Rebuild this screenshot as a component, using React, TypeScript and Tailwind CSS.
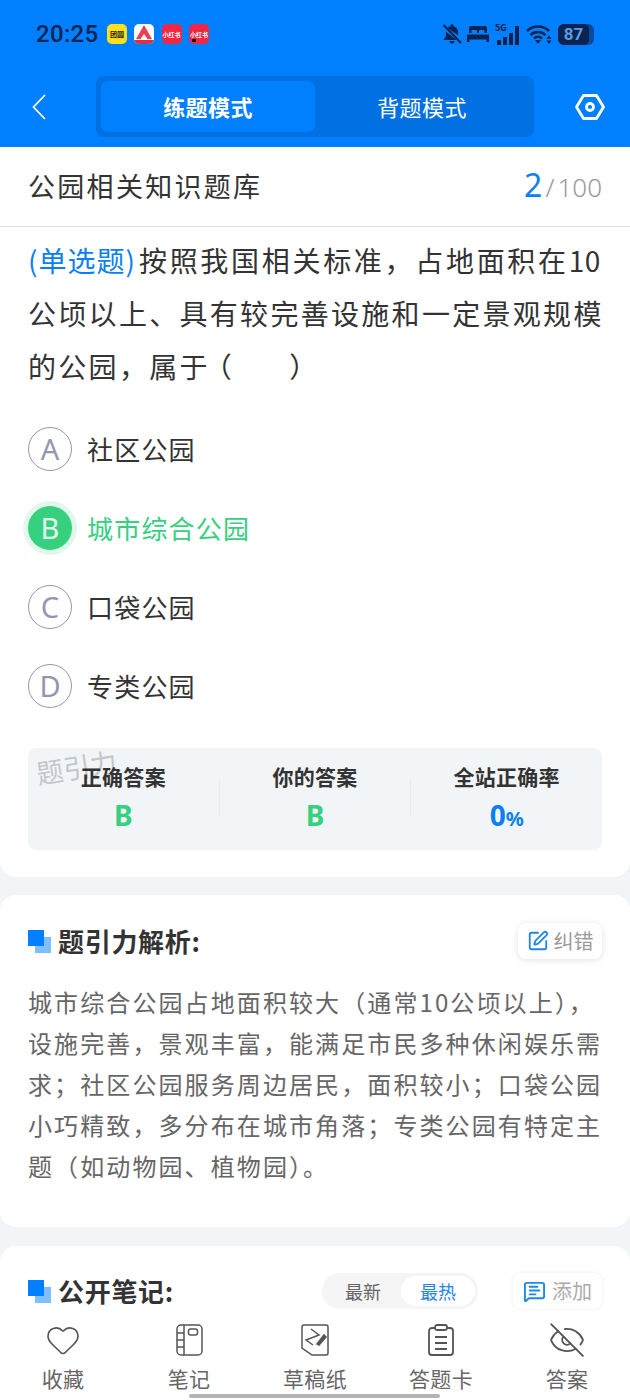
import { Heart, EyeOff, SquarePen, MessageSquareText } from "lucide-react";

const CJK = "font-['Noto_Sans_CJK_SC','Noto_Sans',sans-serif]";

const StatusBar = () => (
	<div className="h-[76px] pl-[36px] pr-[36px] pt-[20px] flex items-start justify-between">
		<div className="flex items-center h-[28px]">
			<span className="text-[24px] font-medium leading-[28px] tracking-[0.3px] text-[#0a2350] w-[62px] font-['Roboto',sans-serif]">20:25</span>
			<div className="flex gap-[7.300px] ml-[9px]">
				<div className="w-[20px] h-[20px] rounded-[5px] bg-[#ffe01a] flex items-center justify-center text-[7px] font-bold text-[#222]">团圆</div>
				<div className="w-[20px] h-[20px] rounded-[5px] bg-white flex items-center justify-center overflow-hidden">
					<svg viewBox="0 0 20 20" className="w-[20px] h-[20px]">
						<path d="M10 1 L18 15 L13.500 15 L10 10 L6.500 15 L2 15 Z" fill="#ef4050" />
						<rect x="0" y="16" width="20" height="4" fill="#d9304a" />
					</svg>
				</div>
				<div className="w-[20px] h-[20px] rounded-[5px] bg-[#ee2745] flex items-center justify-center text-[6px] font-bold text-white">小红书</div>
				<div className="relative w-[20px] h-[20px] rounded-[5px] bg-[#ee2745] flex items-center justify-center text-[6px] font-bold text-white">
					小红书
					<span className="absolute left-[3px] bottom-[2px] w-[4px] h-[3px] rounded-[1px] bg-black" />
				</div>
			</div>
		</div>
		<div className="flex items-center h-[28px] text-[#0a2350]">
			{/* bell muted */}
			<svg viewBox="0 0 20 20" className="w-[20px] h-[20px] mr-[5px]" fill="currentColor">
				<path d="M8.500 1.500a1.500 1.500 0 0 1 3 0v.7c3 .7 4.700 3 4.700 6v3.300L3.700 2.700 5.200 4.200C6 3.200 7 2.500 8.500 2.200Z" />
				<path d="M3.800 7.500 14.500 16H1.800v-1l2-2.200Z" />
				<path d="M7.500 17h5a2.500 2.500 0 0 1-5 0Z" />
				<path d="M1.500 1 19 19" stroke="currentColor" strokeWidth="2" />
			</svg>
			<svg viewBox="0 0 22 16" className="w-[22px] h-[16px] mr-[6px]" fill="currentColor">
				<path d="M4 0h14a2 2 0 0 1 2 2v5h-2.500V5a1 1 0 0 0-1-1H13a1 1 0 0 0-1 1v2h-2V5a1 1 0 0 0-1-1H5.500a1 1 0 0 0-1 1v2H2V2a2 2 0 0 1 2-2Z" />
				<path d="M0 8.500h22V16h-2.500v-2.500h-17V16H0Z" />
			</svg>
			<div className="relative w-[24px] h-[21px] mr-[7px]">
				<span className="absolute left-0 top-[-1px] text-[9px] font-bold leading-[10px]">5G</span>
				<div className="absolute bottom-0 left-[2px] flex items-end gap-[2px]">
					<span className="w-[4px] h-[5px] bg-current" />
					<span className="w-[4px] h-[8px] bg-current" />
					<span className="w-[4px] h-[12px] bg-current" />
					<span className="w-[4px] h-[19px] bg-current" />
				</div>
			</div>
			<svg viewBox="0 0 26 21" className="w-[26px] h-[21px] mr-[6px]" fill="none" stroke="currentColor" strokeWidth="2.600">
				<path d="M1 7C7 1 17 1 23 7" />
				<path d="M4.500 11C8.500 7 15.500 7 19.500 11" />
				<path d="M8 14.500C10.500 12.300 13.500 12.300 16 14.500" />
				<path d="M9 16H15L12 20Z" fill="currentColor" stroke="none" />
				<path d="M20.500 15h5l-2.500-3.500ZM20.500 16.500h5l-2.500 3.500Z" fill="currentColor" stroke="none" />
			</svg>
			<div className="w-[36px] h-[21px] rounded-[6px] bg-[#0a4a9c] overflow-hidden">
				<div className="w-[31px] h-[21px] rounded-[5px] bg-[#0a2350] text-[#5d9be0] text-[17px] font-bold leading-[21px] text-center font-['Roboto',sans-serif]">87</div>
			</div>
		</div>
	</div>
);

const Header = () => (
	<div className={`h-[147px] bg-[#0080ff] text-white ${CJK}`}>
		<StatusBar />
		<div className="flex items-start pl-[32px] pr-[25px]">
			<div className="w-[64px] h-[61px] flex items-center">
				<svg viewBox="0 0 14 26" className="w-[14px] h-[26px]" fill="none" stroke="white" strokeWidth="1.800">
					<path d="M13 1 1.500 13 13 25" />
				</svg>
			</div>
			<div className="w-[438px] h-[61px] p-[5px] rounded-[8px] bg-[#0070e2] flex">
				<div className="w-[214px] rounded-[7px] bg-[#0080ff] flex items-center justify-center text-[22px] tracking-[0.400px] font-bold">练题模式</div>
				<div className="flex-1 flex items-center justify-center text-[22px] tracking-[0.400px]">背题模式</div>
			</div>
			<div className="flex-1 h-[61px] flex items-center justify-end">
				<svg viewBox="0 0 30 26" className="w-[30px] h-[26px]" fill="none" stroke="white" strokeWidth="2.800">
					<path d="M8.500 1.500h13L28.500 13l-7 11.500h-13L1.500 13Z" strokeLinejoin="round" />
					<circle cx="15" cy="13" r="3.500" />
				</svg>
			</div>
		</div>
	</div>
);

const Option = ({ letter, text, active }: { letter: string; text: string; active?: boolean }) => (
	<div className="h-[79px] flex items-center">
		{active ? (
			<div className="w-[44px] h-[44px] rounded-full bg-[#36d07f] ring-[5px] ring-[#e1f8ec] text-[#e6faef] flex items-center justify-center text-[29px] font-['Noto_Sans',sans-serif]">
				{letter}
			</div>
		) : (
			<div className="w-[44px] h-[44px] rounded-full border-[1.500px] border-[#9397ae] text-[#9397ae] flex items-center justify-center text-[29px] font-['Noto_Sans',sans-serif]">
				{letter}
			</div>
		)}
		<span className={`ml-[15px] text-[26px] tracking-[1.200px] ${active ? "text-[#36d07f]" : "text-[#333]"}`}>{text}</span>
	</div>
);

const ResultCell = ({ label, children }: { label: string; children: React.ReactNode }) => (
	<div className="flex-1 flex flex-col items-center">
		<span className="text-[21px] leading-[30px] tracking-[0.300px] font-bold text-[#333]">{label}</span>
		<span className="mt-[5px] leading-[38px] h-[38px] font-['Noto_Sans',sans-serif] font-bold text-[28px]">{children}</span>
	</div>
);

const ResultBox = () => (
	<div className="relative h-[102px] mt-[23px] pb-[3px] rounded-[8px] bg-[#f2f5f8] flex items-center">
		<span className="absolute left-[8px] top-[4px] -rotate-[9deg] text-[27px] leading-[30px] text-[#c4c6ca]">题引力</span>
		<div className="relative flex-1 flex items-center">
			<ResultCell label="正确答案">
				<span className="text-[#36d07f]">B</span>
			</ResultCell>
			<div className="w-px h-[38px] bg-[#eaedf0]" />
			<ResultCell label="你的答案">
				<span className="text-[#36d07f]">B</span>
			</ResultCell>
			<div className="w-px h-[38px] bg-[#eaedf0]" />
			<ResultCell label="全站正确率">
				<span className="text-[#0a80f5]">0<span className="text-[20px]">%</span></span>
			</ResultCell>
		</div>
	</div>
);

const Question = () => (
	<div className="bg-white rounded-b-[16px] h-[730px]">
		<div className="h-[80px] px-[28px] border-b border-[#e2e2e2] flex items-center justify-between">
			<span className="text-[27px] tracking-[2.300px] text-[#333]">公园相关知识题库</span>
			<span className="flex items-baseline font-['Noto_Sans',sans-serif] -mt-[4px]">
				<span className="text-[32px] text-[#0a80f5]">2</span>
				<span className="text-[26px] text-[#9a9a9a] ml-[3px] font-light">/</span>
				<span className="text-[26px] text-[#9a9a9a] ml-[3px] font-light">100</span>
			</span>
		</div>
		<div className="px-[28px]">
			<p className="text-[28px] tracking-[2.300px] leading-[53px] pt-[7px] text-[#333] whitespace-nowrap">
				<span className="text-[#0a80f5] mr-[3px] tracking-[1px]">(单选题)</span>
				<span className="tracking-[2.700px]">按照我国相关标准，占地面积在</span>
				<span className="tracking-[0.500px]">10</span>
				<br />
				公顷以上、具有较完善设施和一定景观规模
				<br />
				的公园，属<span className="tracking-[-3.700px]">于</span>（
				<span className="inline-block w-[55px]" />）
			</p>
			<div className="mt-[16px]">
				<Option letter="A" text="社区公园" />
				<Option letter="B" text="城市综合公园" active />
				<Option letter="C" text="口袋公园" />
				<Option letter="D" text="专类公园" />
			</div>
			<ResultBox />
		</div>
	</div>
);

const SectionMark = () => (
	<div className="relative w-[23px] h-[23px]">
		<span className="absolute right-0 bottom-0 w-[16px] h-[16px] bg-[#80bfff]" />
		<span className="absolute left-0 top-0 w-[16px] h-[16px] bg-[#0080ff]" />
	</div>
);

const Analysis = () => (
	<div className="mt-[18px] bg-white rounded-[16px] h-[332px] px-[28px] pt-[28px]">
		<div className="flex items-center justify-between h-[36px]">
			<div className="flex items-center gap-[7px]">
				<SectionMark />
				<span className="text-[26px] font-bold text-[#333] tracking-[0.700px] -mt-[2px]">题引力解析:</span>
			</div>
			<div className="w-[84px] h-[36px] rounded-[8px] bg-white shadow-[0_1px_6px_rgba(0,0,0,0.12)] flex items-center justify-center gap-[5px] text-[20px] text-[#9a9a9a]">
				<SquarePen className="w-[22px] h-[22px] text-[#1f86ee]" strokeWidth={2} />
				纠错
			</div>
		</div>
		<p className="mt-[22px] text-[24px] tracking-[2.100px] leading-[41px] text-[#666] whitespace-nowrap">
			城市综合公园占地面积较大（通常10公顷以上），
			<br />
			设施完善，景观丰富，能满足市民多种休闲娱乐需
			<br />
			求；社区公园服务周边居民，面积较小；口袋公园
			<br />
			小巧精致，多分布在城市角落；专类公园有特定主
			<br />
			题（如动物园、植物园）。
		</p>
	</div>
);

const Notes = () => (
	<div className="mt-[19px] bg-white rounded-t-[16px] h-[154px] px-[28px] pt-[27px]">
		<div className="flex items-center h-[36px]">
			<SectionMark />
			<span className="ml-[7px] text-[26px] font-bold text-[#333] tracking-[0.700px] -mt-[2px]">公开笔记:</span>
			<div className="ml-[auto] w-[156px] h-[36px] rounded-full bg-[#f5f5f5] p-[3px] flex items-center text-[18px]">
				<span className="w-[76px] text-center text-[#666]">最新</span>
				<span className="flex-1 h-[30px] leading-[30px] rounded-full bg-white text-center text-[#1f86ee]">最热</span>
			</div>
			<div className="ml-[35px] w-[89px] h-[36px] rounded-[8px] bg-white shadow-[0_0_4px_rgba(0,0,0,0.08)] flex items-center justify-center gap-[6px] text-[20px] text-[#aaa]">
				<MessageSquareText className="w-[23px] h-[23px] text-[#1f86ee]" strokeWidth={2} />
				添加
			</div>
		</div>
	</div>
);

const IconNotebook = () => (
	<svg viewBox="0 0 27 32" className="w-[27px] h-[32px]" fill="none" stroke="#555" strokeWidth="1.500">
		<rect x="1" y="1" width="25" height="30" rx="4" />
		<path d="M8 1v30M1 9h7M1 16h7M1 23h7" />
		<rect x="12.500" y="5" width="9" height="6" rx="2" />
	</svg>
);

const IconDraft = () => (
	<svg viewBox="0 0 28 32" className="w-[28px] h-[32px]" fill="none" stroke="#555" strokeWidth="1.500">
		<path d="M3 1h22a2 2 0 0 1 2 2v26a2 2 0 0 1-2 2H11l-10-7V3a2 2 0 0 1 2-2Z" />
		<path d="M10 5l8 6-13 5 7 5" />
		<path d="M16 20l7-9 2 2-7 8Z" fill="#555" />
	</svg>
);

const IconCard = () => (
	<svg viewBox="0 0 28 32" className="w-[28px] h-[32px]" fill="none" stroke="#555" strokeWidth="1.800">
		<path d="M8 4H5a3 3 0 0 0-3 3v21a3 3 0 0 0 3 3h18a3 3 0 0 0 3-3V7a3 3 0 0 0-3-3h-3" />
		<rect x="8" y="1" width="12" height="5" rx="2" />
		<path d="M8 13h12M8 19h12M8 25h12" />
	</svg>
);

const TabItem = ({ label, children }: { label: string; children: React.ReactNode }) => (
	<div className="flex flex-col items-center w-[100px]">
		<div className="h-[34px] flex items-center justify-center">{children}</div>
		<span className="mt-[6px] text-[21px] leading-[30px] tracking-[0.300px] text-[#666]">{label}</span>
	</div>
);

const BottomBar = () => (
	<div className="absolute left-0 right-0 bottom-0 h-[90px] bg-white">
		<div className="flex justify-between px-[13px] pt-[13px]">
			<TabItem label="收藏">
				<Heart className="w-[36px] h-[36px] text-[#555]" strokeWidth={1.100} />
			</TabItem>
			<TabItem label="笔记">
				<IconNotebook />
			</TabItem>
			<TabItem label="草稿纸">
				<IconDraft />
			</TabItem>
			<TabItem label="答题卡">
				<IconCard />
			</TabItem>
			<TabItem label="答案">
				<EyeOff className="w-[38px] h-[38px] text-[#555]" strokeWidth={1.200} />
			</TabItem>
		</div>
		<div className="absolute left-[189px] bottom-[2px] w-[251px] h-[4px] rounded-full bg-[#b4b4b4]" />
	</div>
);

export default function App() {
	return (
		<div className={`relative w-[630px] h-[1400px] overflow-hidden bg-[#f2f5f8] ${CJK}`}>
			<Header />
			<Question />
			<Analysis />
			<Notes />
			<BottomBar />
		</div>
	);
}
